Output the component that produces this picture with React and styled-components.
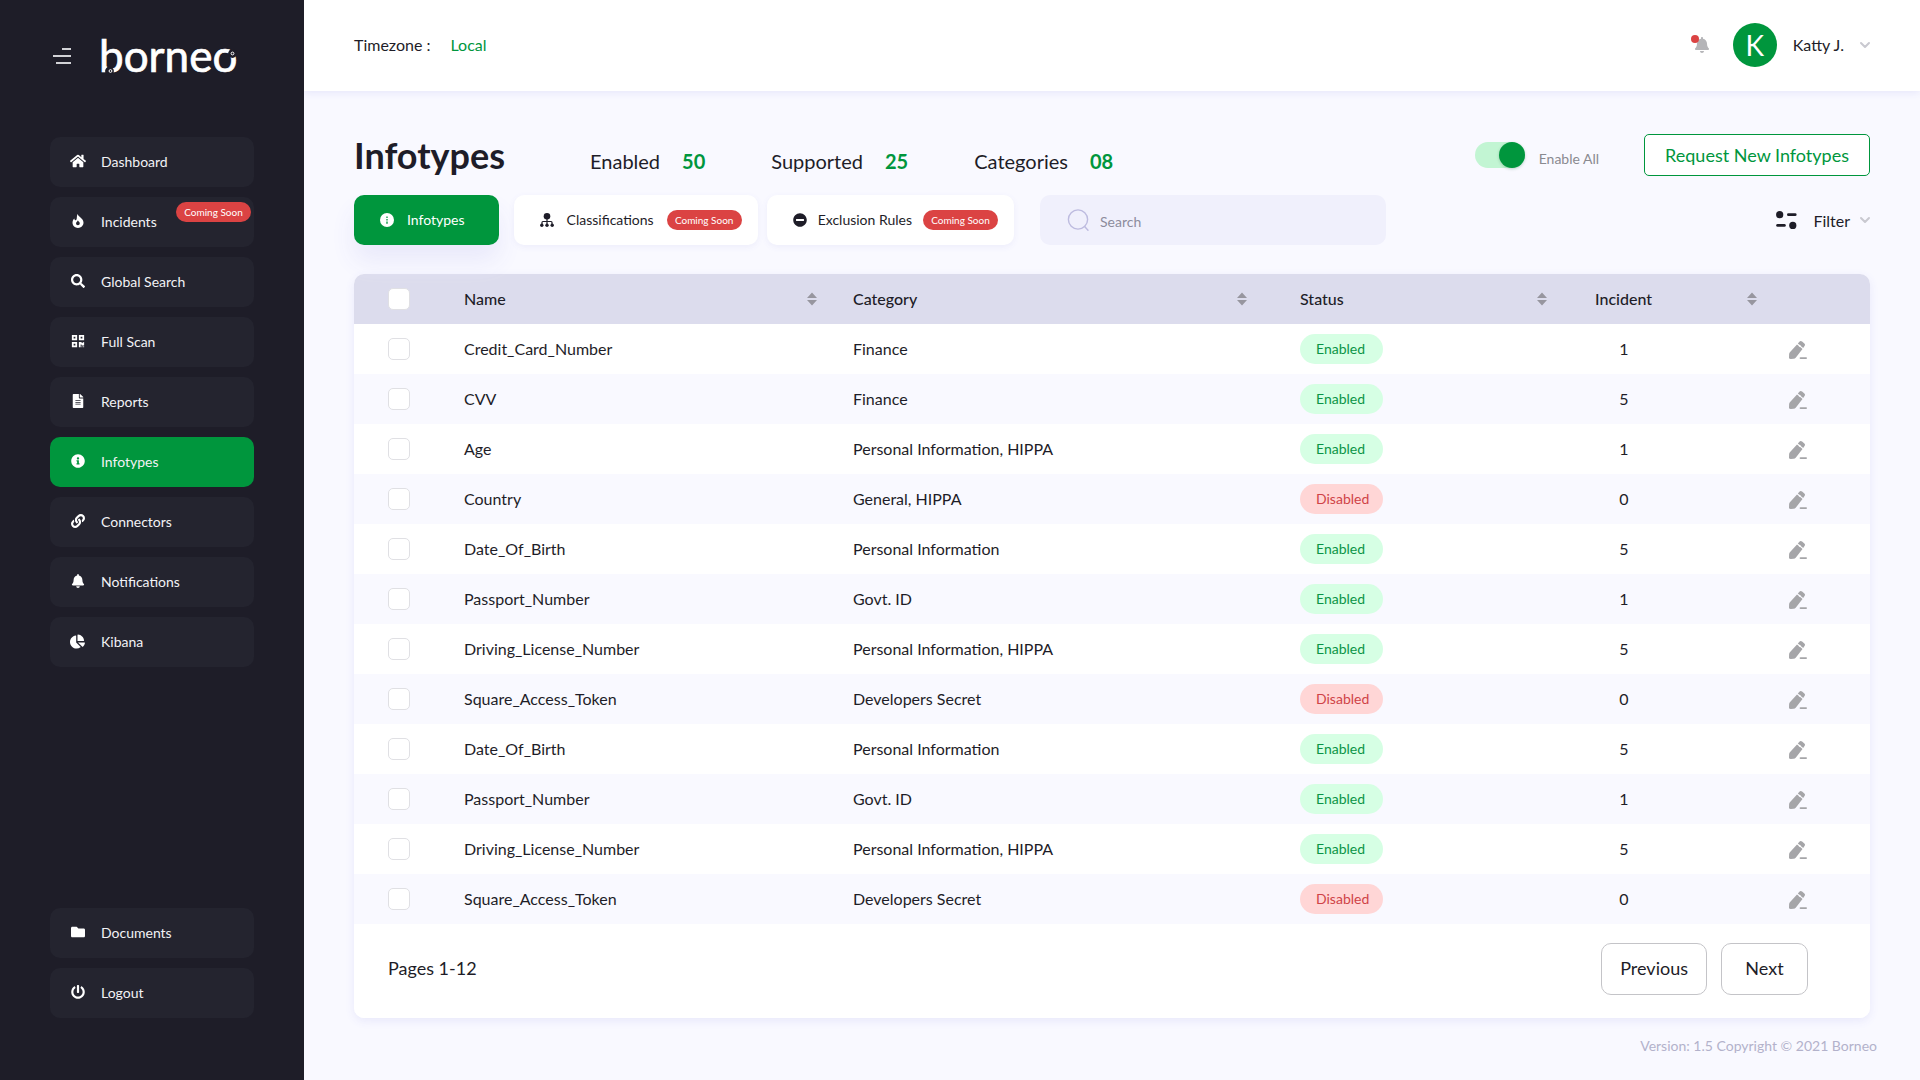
import React, { useState } from 'react';
import styled, { createGlobalStyle, css } from 'styled-components';
import {
  FaBell,
  FaChartPie,
  FaFileAlt,
  FaFolder,
  FaHome,
  FaInfoCircle,
  FaLink,
  FaMinusCircle,
  FaPowerOff,
  FaQrcode,
  FaSearch,
} from 'react-icons/fa';
import { FiChevronDown } from 'react-icons/fi';

const colors = {
  dark: '#1e1d28',
  item: '#24242f',
  green: '#00963d',
  red: '#db4343',
  page: '#f9f9ff',
  head: '#dcdced',
  muted: '#8a8a90',
};

const GlobalStyle = createGlobalStyle`
  *,
  *::before,
  *::after {
    box-sizing: border-box;
  }

  body {
    margin: 0;
    background: ${colors.page};
    color: ${colors.dark};
    font-family: Lato, 'Open Sans', sans-serif;
    font-size: 16px;
  }

  button,
  input {
    font: inherit;
    color: inherit;
  }

  button {
    padding: 0;
    border: 0;
    background: none;
    cursor: pointer;
  }

  svg {
    flex: none;
    display: block;
  }
`;

const Page = styled.div`
  display: grid;
  grid-template-columns: 304px minmax(0, 1fr);
  min-height: 100vh;
`;

/* sidebar */

const Sidebar = styled.aside`
  z-index: 1;
  display: flex;
  flex-direction: column;
  padding: 32px 50px 62px;
  background: ${colors.dark};
  color: #fff;
`;

const Brand = styled.div`
  display: flex;
  align-items: center;
  gap: 24px;
  height: 48px;
  margin-bottom: 57px;
`;

const MenuButton = styled.button`
  margin-left: 3px;
`;

const NavList = styled.nav`
  display: flex;
  flex-direction: column;
  gap: 10px;

  & + & {
    margin-top: auto;
  }
`;

const NavItem = styled.a`
  position: relative;
  display: flex;
  align-items: center;
  height: 50px;
  padding: 0 0 2px 20px;
  border-radius: 10px;
  background: ${({ $active }) => ($active ? colors.green : colors.item)};
  color: #f2f2f5;
  font-size: 14px;
  text-decoration: none;
`;

const NavIcon = styled.span`
  display: flex;
  justify-content: center;
  width: 15px;
  margin-right: 16px;
  color: #fff;
`;

const Badge = styled.span`
  display: inline-flex;
  align-items: center;
  justify-content: center;
  width: 75px;
  height: 20px;
  border-radius: 10px;
  background: ${colors.red};
  color: #fff;
  font-size: 10px;
  white-space: nowrap;

  ${({ $floating }) =>
    $floating &&
    css`
      position: absolute;
      top: 5px;
      right: 3px;
    `}
`;

/* top bar */

const Main = styled.div`
  display: flex;
  flex-direction: column;
`;

const TopBar = styled.header`
  display: flex;
  align-items: center;
  justify-content: space-between;
  height: 91px;
  padding: 0 50px 2px;
  background: #fff;
  box-shadow: 0 2px 8px #e6e6fb;
`;

const Timezone = styled.div`
  display: flex;
  gap: 20px;

  strong {
    color: ${colors.green};
    font-weight: 400;
  }
`;

const Account = styled.div`
  display: flex;
  align-items: center;
`;

const BellButton = styled.button`
  position: relative;
  margin-right: 23px;
  color: #b5b5b8;

  &::before {
    content: '';
    position: absolute;
    top: -2px;
    left: -3px;
    width: 8px;
    height: 8px;
    border-radius: 50%;
    background: ${colors.red};
  }
`;

const Avatar = styled.span`
  display: flex;
  align-items: center;
  justify-content: center;
  width: 44px;
  height: 44px;
  margin-right: 16px;
  border-radius: 50%;
  background: ${colors.green};
  color: #fff;
  font-size: 28px;
`;

const DropButton = styled.button`
  display: flex;
  align-items: center;
  gap: ${({ $gap }) => $gap}px;

  svg:last-child {
    margin-right: -3px;
    color: #c9c9d0;
  }
`;

/* heading and filters */

const Content = styled.main`
  padding: 43px 50px 0;
`;

const HeadingRow = styled.div`
  display: flex;
  align-items: center;
  justify-content: space-between;
  height: 42px;
  margin-bottom: 19px;
`;

const Heading = styled.div`
  display: flex;
  align-items: baseline;
`;

const Title = styled.h1`
  margin: 0 85px 0 0;
  font-size: 36px;
  font-weight: 700;
  line-height: 42px;
`;

const Stats = styled.dl`
  display: flex;
  gap: 66px;
  margin: 0;
  font-size: 20px;
`;

const Stat = styled.div`
  display: flex;
  gap: 22px;

  dd {
    margin: 0;
    color: ${colors.green};
    font-weight: 700;
  }
`;

const Actions = styled.div`
  display: flex;
  align-items: center;
  gap: 45px;
`;

const SwitchLabel = styled.label`
  display: flex;
  align-items: flex-end;
  gap: 14px;
  color: ${colors.muted};
  font-size: 14px;
  line-height: 18px;
`;

const Switch = styled.input`
  appearance: none;
  display: flex;
  width: 50px;
  height: 26px;
  margin: 0;
  border-radius: 13px;
  background: #c2f5d3;
  cursor: pointer;

  &::before {
    content: '';
    width: 26px;
    height: 26px;
    border-radius: 50%;
    background: #a5a5ad;
    box-shadow: 0 1px 3px rgba(0, 90, 40, 0.25);
  }

  &:checked::before {
    margin-left: auto;
    background: ${colors.green};
  }
`;

const RequestButton = styled.button`
  height: 42px;
  padding: 0 20px;
  border: 1px solid ${colors.green};
  border-radius: 5px;
  background: #fff;
  color: ${colors.green};
  font-size: 18px;
  white-space: nowrap;
`;

const ToolRow = styled.div`
  display: flex;
  align-items: center;
  margin-bottom: 29px;
`;

const Tabs = styled.div`
  display: flex;
  gap: 9px;
`;

const Tab = styled.button`
  display: flex;
  align-items: center;
  gap: ${({ $gap }) => $gap || 13}px;
  height: 50px;
  padding: 0 16px 0 26px;
  border-radius: 10px;
  background: #fff;
  box-shadow: 0 2px 6px #ededfb;
  font-size: 14px;
  line-height: 16px;
  white-space: nowrap;

  ${({ $active }) =>
    $active &&
    css`
      margin-right: 6px;
      padding-right: 34px;
      background: ${colors.green};
      box-shadow: 0 16px 24px #e9e9fb;
      color: #fff;
    `}
`;

const SearchBox = styled.label`
  display: flex;
  align-items: center;
  gap: 11px;
  flex: 0 1 346px;
  height: 50px;
  margin-left: 26px;
  padding: 0 27px;
  border-radius: 10px;
  background: #f0f0fc;

  input {
    flex: 1;
    min-width: 0;
    padding: 3px 0 0;
    border: 0;
    outline: 0;
    background: none;
    font-size: 14px;
  }

  input::placeholder {
    color: #8d8c9c;
    opacity: 1;
  }
`;

const FilterArea = styled.div`
  margin-left: auto;
`;

const FilterText = styled.span`
  margin: 0 7px 0 16px;
`;

/* table */

const Card = styled.section`
  overflow: hidden;
  border-radius: 10px;
  background: #fff;
`;

const CardShadow = styled.div`
  border-radius: 10px;
  box-shadow: 0 3px 10px #e8e8fb;
`;

const Table = styled.table`
  width: 100%;
  table-layout: fixed;
  border-collapse: collapse;
`;

const HeadCell = styled.th`
  height: 50px;
  padding: 0 ${({ $end }) => $end || 0}px 0 0;
  background: ${colors.head};
  font-weight: 500;
  text-align: left;
`;

const SortButton = styled.button`
  display: flex;
  align-items: center;
  justify-content: space-between;
  width: 100%;
  line-height: 18px;
`;

const Row = styled.tr`
  background: #fff;

  &:nth-child(even) {
    background: ${colors.page};
  }
`;

const Cell = styled.td`
  height: 50px;
  padding: 0 0 ${({ $text }) => ($text ? 2 : 0)}px;
`;

const Checkbox = styled.input`
  appearance: none;
  display: block;
  width: 22px;
  height: 22px;
  margin: 0 0 0 34px;
  border: 1px solid #e0e0e4;
  border-radius: 5px;
  background: #fff;

  &:checked {
    border-color: ${colors.green};
    background: ${colors.green};
  }
`;

const Status = styled.span`
  display: flex;
  align-items: center;
  width: 83px;
  height: 30px;
  padding: 0 0 2px 16px;
  border-radius: 15px;
  background: ${({ $on }) => ($on ? '#d6ffe4' : '#ffd6d6')};
  color: ${({ $on }) => ($on ? '#0b9446' : '#cf4347')};
  font-size: 14px;
`;

const Count = styled.span`
  display: block;
  width: 58px;
  text-align: center;
`;

const EditButton = styled.button`
  display: block;
  padding-top: 2px;
`;

const Pager = styled.div`
  display: flex;
  align-items: center;
  height: 94px;
  padding: 0 62px 4px 34px;
  font-size: 18px;
`;

const PageRange = styled.span`
  padding-bottom: 2px;
`;

const PagerButtons = styled.div`
  display: flex;
  gap: 14px;
  margin-left: auto;
`;

const PagerButton = styled.button`
  min-width: 87px;
  height: 52px;
  padding: 0 18px 2px;
  border: 1px solid #c4c4c8;
  border-radius: 10px;
  background: #fff;
`;

const Footer = styled.footer`
  padding: 19px 43px;
  color: #b3b2cb;
  font-size: 14px;
  line-height: 17px;
  text-align: right;
`;

const MenuIcon = () => (
  <svg width="20" height="18" viewBox="0 0 20 18" stroke="#d2d2d6" strokeWidth="2">
    <path d="M9 2h9M0 9h18M3 16h15" />
  </svg>
);

const Logo = () => (
  <svg width="150" height="60" viewBox="0 0 150 60" role="img" aria-label="borneo">
    <text
      x="2"
      y="46"
      fill="#fff"
      stroke="#fff"
      strokeWidth=".7"
      fontFamily="Lato, sans-serif"
      fontSize="44"
    >
      borneo
    </text>
    <circle cx="12.5" cy="45" r="4.4" fill={colors.dark} />
    <circle cx="13.5" cy="45" r="1.4" fill="none" stroke="#fff" />
    <circle cx="135.5" cy="27.5" r="4.4" fill={colors.dark} />
    <circle cx="135.5" cy="27.5" r="1.4" fill="none" stroke="#fff" />
  </svg>
);

const FlameIcon = () => (
  <svg width="12" height="14" viewBox="0 0 12 14" fill="currentColor" fillRule="evenodd">
    <path d="M5.6 0C6.2 2.8 11.5 4.2 11.5 8.6 11.5 11.8 9 14 6 14S.5 11.8.5 8.8C.5 6.8 1.3 5.4 2.3 4.4 2.5 5.6 2.8 6.2 3.5 6.3 5.6 5.8 4.2 2.6 5.6 0zM5.9 6.2C5.8 7.4 4 7.9 4 9.3A1.9 1.9 0 0 0 7.8 9.300C7.800 8 6.400 7.600 5.900 6.200z" />
  </svg>
);

const DotInfoIcon = () => (
  <svg width="14" height="14" viewBox="0 0 14 14">
    <circle cx="7" cy="7" r="7" fill="#fff" />
    <path d="M7 3.6v1.4M7 6v1.4M7 8.600v1.600M6.300 10.100h1.400" stroke={colors.green} strokeWidth="1.3" />
  </svg>
);

const TreeIcon = () => (
  <svg width="14" height="14" viewBox="0 0 14 14" fill="currentColor">
    <circle cx="7" cy="3.3" r="3.3" />
    <path
      d="M7 6v6M2 12V9.4q0-.9.9-.9h8.2q.9 0 .9.9V12"
      fill="none"
      stroke="currentColor"
      strokeWidth="1.2"
    />
    <circle cx="1.8" cy="12.3" r="1.7" />
    <circle cx="7" cy="12.3" r="1.7" />
    <circle cx="12.2" cy="12.3" r="1.7" />
  </svg>
);

const LensIcon = () => (
  <svg width="22" height="22" viewBox="0 0 22 22" fill="none" stroke="#bdbbdf" strokeWidth="1.4">
    <circle cx="11" cy="10.5" r="9.6" />
    <path d="M17.6 17.5l3.4 3.8" strokeLinecap="round" />
  </svg>
);

const FilterIcon = () => (
  <svg width="21" height="18" viewBox="0 0 21 18" fill="currentColor">
    <circle cx="3.7" cy="3.7" r="3.6" />
    <rect x="11" y="2.3" width="9.6" height="2.8" rx="1.4" />
    <rect x="0.2" y="13" width="9.6" height="2.8" rx="1.4" />
    <circle cx="16.8" cy="14.4" r="3.6" />
  </svg>
);

const SortIcon = () => (
  <svg width="10" height="14" viewBox="0 0 10 14" fill="#97969f">
    <path d="M5 .5L10 6H0zM0 8h10l-5 5.5z" />
  </svg>
);

const EditIcon = () => (
  <svg width="18" height="18" viewBox="0 0 18 18" fill="#a5a5a8">
    <path d="M8 3.5l1.600 1.300q.2 1.200 1.600 1.200l2.300 1.900-6.600 8.600q-.9 1.200-2.400 1.300l-2.600.2Q0 18 0 16.800l.1-3.400q0-1.200.8-2.200z" />
    <path d="M8.800 2.500l1.400-1.600q1.300-1.500 2.900-.3l2 1.600q1.600 1.300.4 2.900L14.200 6.900 11.800 5q-.2-1.200-1.500-1.300z" />
    <rect x="10.6" y="16.200" width="7.400" height="1.800" rx=".9" />
  </svg>
);

const mainNav = [
  { label: 'Dashboard', icon: <FaHome size={16} /> },
  { label: 'Incidents', icon: <FlameIcon />, soon: true },
  { label: 'Global Search', icon: <FaSearch size={14} /> },
  { label: 'Full Scan', icon: <FaQrcode size={14} /> },
  { label: 'Reports', icon: <FaFileAlt size={14} /> },
  { label: 'Infotypes', icon: <FaInfoCircle size={14} />, active: true },
  { label: 'Connectors', icon: <FaLink size={14} /> },
  { label: 'Notifications', icon: <FaBell size={14} /> },
  { label: 'Kibana', icon: <FaChartPie size={15} /> },
];

const bottomNav = [
  { label: 'Documents', icon: <FaFolder size={14} /> },
  { label: 'Logout', icon: <FaPowerOff size={14} /> },
];

const stats = [
  ['Enabled', '50'],
  ['Supported', '25'],
  ['Categories', '08'],
];

const columns = [
  { label: 'Name', end: 36 },
  { label: 'Category', end: 53 },
  { label: 'Status', end: 48 },
  { label: 'Incident', end: 32 },
];

const infotypes = [
  ['Credit_Card_Number', 'Finance', true, 1],
  ['CVV', 'Finance', true, 5],
  ['Age', 'Personal Information, HIPPA', true, 1],
  ['Country', 'General, HIPPA', false, 0],
  ['Date_Of_Birth', 'Personal Information', true, 5],
  ['Passport_Number', 'Govt. ID', true, 1],
  ['Driving_License_Number', 'Personal Information, HIPPA', true, 5],
  ['Square_Access_Token', 'Developers Secret', false, 0],
  ['Date_Of_Birth', 'Personal Information', true, 5],
  ['Passport_Number', 'Govt. ID', true, 1],
  ['Driving_License_Number', 'Personal Information, HIPPA', true, 5],
  ['Square_Access_Token', 'Developers Secret', false, 0],
];

const Nav = ({ items, label }) => (
  <NavList aria-label={label}>
    {items.map((item) => (
      <NavItem key={item.label} href="#" $active={item.active}>
        <NavIcon>{item.icon}</NavIcon>
        {item.label}
        {item.soon && <Badge $floating>Coming Soon</Badge>}
      </NavItem>
    ))}
  </NavList>
);

const InfotypesTable = () => (
  <Table>
    <colgroup>
      <col width="110" />
      <col width="389" />
      <col width="447" />
      <col width="295" />
      <col width="194" />
      <col width="81" />
    </colgroup>
    <thead>
      <tr>
        <HeadCell>
          <Checkbox type="checkbox" aria-label="Select all" />
        </HeadCell>
        {columns.map(({ label, end }) => (
          <HeadCell key={label} $end={end}>
            <SortButton>
              {label}
              <SortIcon />
            </SortButton>
          </HeadCell>
        ))}
        <HeadCell />
      </tr>
    </thead>
    <tbody>
      {infotypes.map(([name, category, on, incidents], i) => (
        <Row key={i}>
          <Cell>
            <Checkbox type="checkbox" aria-label={`Select ${name}`} />
          </Cell>
          <Cell $text>{name}</Cell>
          <Cell $text>{category}</Cell>
          <Cell>
            <Status $on={on}>{on ? 'Enabled' : 'Disabled'}</Status>
          </Cell>
          <Cell $text>
            <Count>{incidents}</Count>
          </Cell>
          <Cell>
            <EditButton aria-label={`Edit ${name}`}>
              <EditIcon />
            </EditButton>
          </Cell>
        </Row>
      ))}
    </tbody>
  </Table>
);

const App = () => {
  const [allEnabled, setAllEnabled] = useState(true);

  return (
    <Page>
      <GlobalStyle />
      <Sidebar>
        <Brand>
          <MenuButton aria-label="Toggle menu">
            <MenuIcon />
          </MenuButton>
          <Logo />
        </Brand>
        <Nav items={mainNav} label="Main" />
        <Nav items={bottomNav} label="Account" />
      </Sidebar>

      <Main>
        <TopBar>
          <Timezone>
            <span>Timezone :</span>
            <strong>Local</strong>
          </Timezone>
          <Account>
            <BellButton aria-label="Alerts">
              <FaBell size={16} />
            </BellButton>
            <Avatar>K</Avatar>
            <DropButton $gap={13}>
              Katty J.
              <FiChevronDown size={16} strokeWidth={3} />
            </DropButton>
          </Account>
        </TopBar>

        <Content>
          <HeadingRow>
            <Heading>
              <Title>Infotypes</Title>
              <Stats>
                {stats.map(([label, value]) => (
                  <Stat key={label}>
                    <dt>{label}</dt>
                    <dd>{value}</dd>
                  </Stat>
                ))}
              </Stats>
            </Heading>
            <Actions>
              <SwitchLabel>
                <Switch
                  type="checkbox"
                  role="switch"
                  checked={allEnabled}
                  onChange={(e) => setAllEnabled(e.target.checked)}
                />
                Enable All
              </SwitchLabel>
              <RequestButton>Request New Infotypes</RequestButton>
            </Actions>
          </HeadingRow>

          <ToolRow>
            <Tabs>
              <Tab $active>
                <DotInfoIcon />
                Infotypes
              </Tab>
              <Tab>
                <TreeIcon />
                Classifications
                <Badge>Coming Soon</Badge>
              </Tab>
              <Tab $gap={11}>
                <FaMinusCircle size={14} />
                Exclusion Rules
                <Badge>Coming Soon</Badge>
              </Tab>
            </Tabs>
            <SearchBox>
              <LensIcon />
              <input type="search" placeholder="Search" aria-label="Search" />
            </SearchBox>
            <FilterArea>
              <DropButton $gap={0}>
                <FilterIcon />
                <FilterText>Filter</FilterText>
                <FiChevronDown size={16} strokeWidth={3} />
              </DropButton>
            </FilterArea>
          </ToolRow>

          <CardShadow>
            <Card>
              <InfotypesTable />
              <Pager>
                <PageRange>Pages 1-12</PageRange>
                <PagerButtons>
                  <PagerButton>Previous</PagerButton>
                  <PagerButton>Next</PagerButton>
                </PagerButtons>
              </Pager>
            </Card>
          </CardShadow>
        </Content>

        <Footer>Version: 1.5 Copyright © 2021 Borneo</Footer>
      </Main>
    </Page>
  );
};

export default App;
